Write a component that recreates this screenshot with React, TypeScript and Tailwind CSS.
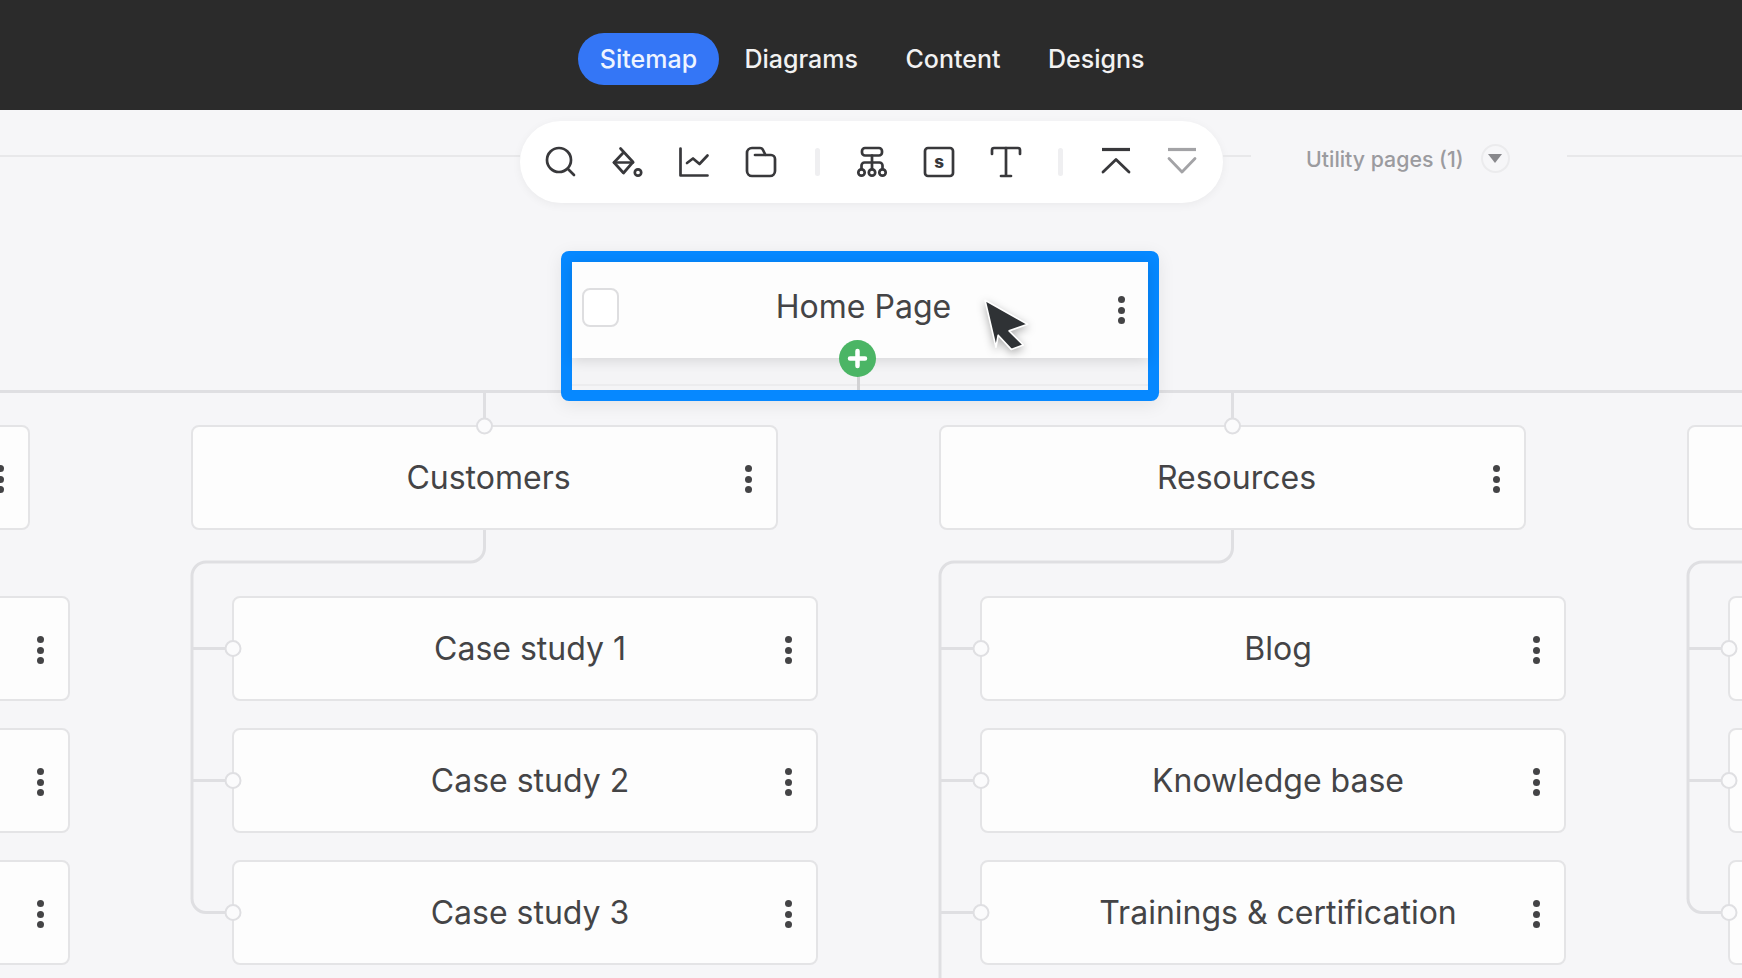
import type { ReactNode } from 'react';

const NAV = ['Diagrams', 'Content', 'Designs'];

const COLUMNS = [
  { parent: '', children: ['', '', ''] },
  { parent: 'Customers', children: ['Case study 1', 'Case study 2', 'Case study 3'] },
  { parent: 'Resources', children: ['Blog', 'Knowledge base', 'Trainings & certification'], trunk: true },
  { parent: '', children: ['', '', ''] },
];

function Icon({ children, faded }: { children: ReactNode; faded?: boolean }) {
  return (
    <svg
      width="32"
      height="32"
      viewBox="0 0 32 32"
      fill="none"
      stroke={faded ? '#a3a3a6' : '#38383b'}
      strokeWidth="2.7"
      strokeLinecap="round"
      strokeLinejoin="round"
      className="shrink-0"
    >
      {children}
    </svg>
  );
}

function Divider({ className }: { className: string }) {
  return <div className={`w-[5px] h-[28px] bg-[#efeff1] rounded-sm shrink-0 ${className}`} />;
}

function Kebab() {
  return (
    <div className="flex flex-col gap-[3.5px] shrink-0 mt-[3px]">
      <div className="w-[7px] h-[7px] rounded-full bg-[#444446]" />
      <div className="w-[7px] h-[7px] rounded-full bg-[#444446]" />
      <div className="w-[7px] h-[7px] rounded-full bg-[#444446]" />
    </div>
  );
}

function Card({ label, child }: { label: string; child?: boolean }) {
  return (
    <div className={`h-[105px] shrink-0 flex items-center bg-[#fdfdfd] border-2 border-[#e4e4e6] rounded-lg pr-[24px] ${child ? 'w-[586px] pl-[41px]' : 'w-[587px] pl-[39px]'}`}>
      <span className="flex-1 text-center text-[32px] text-[#444446] whitespace-nowrap">{label}</span>
      <Kebab />
    </div>
  );
}

function Connectors({ trunk }: { trunk?: boolean }) {
  const line = '#dfdfe2';
  return (
    <svg width="587" height="560" className="absolute left-0 top-0 overflow-visible pointer-events-none" fill="none">
      <path d="M293.5 -35 V0" stroke={line} strokeWidth="3" />
      <path
        d={trunk
          ? 'M293.5 105 V123 a14 14 0 0 1 -14 14 H15 a14 14 0 0 0 -14 14 V560'
          : 'M293.5 105 V123 a14 14 0 0 1 -14 14 H15 a14 14 0 0 0 -14 14 V473.5 a14 14 0 0 0 14 14 H41'}
        stroke={line}
        strokeWidth="3"
      />
      <path d="M1 223.5 H41 M1 355.5 H41" stroke={line} strokeWidth="3" />
      {trunk && <path d="M1 487.5 H41" stroke={line} strokeWidth="3" />}
      {[[293.5, 1], [42, 223.5], [42, 355.5], [42, 487.5]].map(([cx, cy]) => (
        <circle key={cy} cx={cx} cy={cy} r="7.5" fill="#fbfbfc" stroke="#dfdfe2" strokeWidth="2" />
      ))}
    </svg>
  );
}

export default function App() {
  return (
    <div className="w-[1742px] h-[978px] overflow-hidden bg-[#f6f6f8] font-['Inter',sans-serif]">
      <header className="h-[110px] bg-[#2b2b2b] flex items-center pl-[578px] pt-[9px]">
        <div className="w-[141px] h-[52px] -mt-[1px] pt-[1px] rounded-full bg-[#3476f6] flex items-center justify-center text-[25px] font-medium text-[#eef4ff]">
          Sitemap
        </div>
        <div className="flex items-center gap-[47.5px] ml-[25.5px] -mt-[1px] text-[25px] font-medium text-[#f2f2f2]">
          {NAV.map((item) => (
            <span key={item} className="translate-y-[1px]">{item}</span>
          ))}
        </div>
      </header>

      <main className="relative h-[868px]">
        <div className="flex items-start pt-[11px]">
          <div className="w-[520px] h-[2px] bg-[#e8e8ea] mt-[34px] shrink-0" />
          <div className="w-[703px] h-[82px] shrink-0 rounded-full bg-white shadow-[0_2px_10px_rgba(0,0,0,0.05)] flex items-center gap-[34.7px] pl-[25px]">
            <Icon>
              <circle cx="14" cy="14" r="12" />
              <path d="M23.5 23.5 L29 29" />
            </Icon>
            <Icon>
              <path d="M8.5 2.5 L21 16 L11.5 27 L2 16.5 L10.5 7.5" />
              <path d="M2 16.5 H21" />
              <circle cx="26" cy="26.5" r="3.2" />
            </Icon>
            <Icon>
              <path d="M2.5 2.5 V29.5 H29.5" />
              <path d="M9 17 L15 12.5 L21.5 18 L29.5 9.5" />
            </Icon>
            <Icon>
              <path d="M7 2 H15 Q17 2 18 4 L20.5 9 H26 a4 4 0 0 1 4 4 V25 a5 5 0 0 1 -5 5 H7 a5 5 0 0 1 -5 -5 V7 a5 5 0 0 1 5 -5 Z" />
              <path d="M10 9 H20" />
            </Icon>
            <Divider className="ml-[3.5px] mr-[1.5px]" />
            <Icon>
              <rect x="6" y="2" width="20" height="7.5" rx="3" />
              <path d="M16 9.5 V23 M5.5 23 V19.5 a3 3 0 0 1 3 -3 H23.5 a3 3 0 0 1 3 3 V23" />
              <circle cx="5.5" cy="26.5" r="3.2" />
              <circle cx="16" cy="26.5" r="3.2" />
              <circle cx="26.5" cy="26.5" r="3.2" />
            </Icon>
            <Icon>
              <rect x="2" y="2" width="28" height="28" rx="3" />
              <text x="16" y="21.5" textAnchor="middle" fontFamily="Inter" fontWeight="800" fontSize="17" fill="#38383b" stroke="none">s</text>
            </Icon>
            <Icon>
              <path d="M2 8 V4 a2 2 0 0 1 2 -2 H28 a2 2 0 0 1 2 2 V8" />
              <path d="M16 2 V30 M11 30 H21" />
            </Icon>
            <Divider className="ml-[1.3px] mr-[2.2px]" />
            <Icon>
              <path d="M2 3.5 H30" strokeLinecap="butt" strokeWidth="3.2" />
              <path d="M3 26 L16 13.5 L29 26" strokeWidth="2.8" />
            </Icon>
            <Icon faded>
              <path d="M2 3.5 H30" strokeLinecap="butt" strokeWidth="3.2" />
              <path d="M3 12.5 L16 26 L29 12.5" strokeWidth="2.8" />
            </Icon>
          </div>
          <div className="w-[28px] h-[2px] bg-[#e8e8ea] mt-[34px] shrink-0" />
          <div className="flex items-center ml-[55px] mt-[20px] shrink-0">
            <span className="text-[21.3px] font-medium text-[#9b9b9f] leading-[32px] mt-[2px]">Utility pages (1)</span>
            <div className="w-[29px] h-[29px] ml-[17px] rounded-full border-2 border-[#ebebed] flex items-center justify-center">
              <div className="w-0 h-0 border-l-[7px] border-r-[7px] border-t-[9px] border-l-transparent border-r-transparent border-t-[#88888c]" />
            </div>
          </div>
          <div className="ml-[57px] h-[2px] flex-1 bg-[#e8e8ea] mt-[34px]" />
        </div>

        <div className="mt-[187px] border-t-[3px] border-[#dfdfe2] pt-[32px] flex gap-[161px] -ml-[557px]">
          {COLUMNS.map((col, i) => (
            <div key={i} className="relative w-[587px] shrink-0">
              <Card label={col.parent} />
              <div className="mt-[66px] ml-[41px] flex flex-col gap-[27px]">
                {col.children.map((label, j) => (
                  <Card key={j} label={label} child />
                ))}
              </div>
              <Connectors trunk={col.trunk} />
            </div>
          ))}
        </div>

        <div className="absolute left-[561px] top-[141px] w-[598px] h-[150px] border-[11px] border-[#0688ff] rounded-[8px] bg-[#f4f4f6] shadow-[0_4px_18px_rgba(0,0,0,0.08)]">
          <div className="h-[96px] bg-[#fdfdfd] shadow-[0_3px_12px_rgba(0,0,0,0.12)] flex items-center pl-[10px] pr-[23px] pb-[6px]">
            <div className="w-[37px] h-[39px] rounded-lg border-2 border-[#dedee0] bg-white shrink-0" />
            <span className="flex-1 text-center pr-[10px] text-[32px] text-[#444446]">Home Page</span>
            <div className="mt-[3px]">
              <Kebab />
            </div>
          </div>
          <div className="absolute left-0 right-0 bottom-[4px] h-[2px] bg-[#ececee]" />
          <div className="absolute left-[284.5px] top-[96px] w-[3px] h-[32px] bg-[#d2d2d4]" />
          <div className="absolute left-[267px] top-[77.5px] w-[37px] h-[37px] rounded-full bg-[#4bb565] flex items-center justify-center">
            <svg width="21" height="21" viewBox="0 0 21 21" fill="none" stroke="#ffffff" strokeWidth="4.5" strokeLinecap="round">
              <path d="M10.5 3 V18 M3 10.5 H18" />
            </svg>
          </div>
          <svg width="48" height="55" viewBox="0 0 44 50" className="absolute left-[411.5px] top-[37px] drop-shadow-[0_3px_4px_rgba(0,0,0,0.3)]">
            <path d="M1 1 L40 23 L23 29 L36 42 L25 46 L13 33 L11 44 Z" fill="#2f3235" stroke="#ffffff" strokeWidth="1.5" strokeLinejoin="round" />
          </svg>
        </div>
      </main>
    </div>
  );
}
